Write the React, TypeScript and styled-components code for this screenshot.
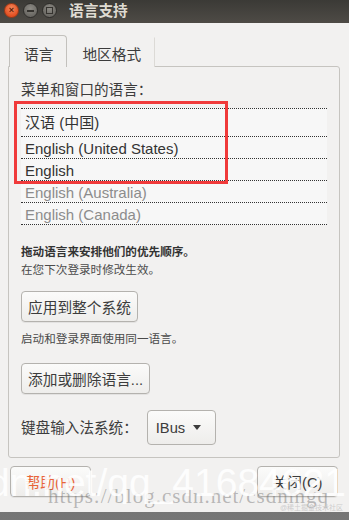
import styled, { createGlobalStyle } from 'styled-components';

const UI = `"Liberation Sans", "Noto Sans CJK SC", sans-serif`;

const GlobalStyle = createGlobalStyle`
  html, body {
    margin: 0;
    padding: 0;
    background: #4a4a4a;
  }
  * {
    box-sizing: border-box;
  }
`;

const Page = styled.div`
  position: relative;
  width: 349px;
  height: 520px;
  overflow: hidden;
  background: linear-gradient(to bottom, #3e3e3e, #767676);
  font-family: ${UI};
`;

const Window = styled.div`
  height: 512px;
  display: flex;
  flex-direction: column;
  background: #f2f1f0;
  color: #3c3c3c;
`;

const TitleBar = styled.div`
  height: 23px;
  flex: none;
  display: flex;
  align-items: center;
  padding: 0 0 2px 4px;
  gap: 4px;
  background: linear-gradient(to bottom, #3b3a36, #4e4b46);
`;

const CircleButton = styled.div<{ $close?: boolean }>`
  width: 15px;
  height: 15px;
  border-radius: 50%;
  display: flex;
  align-items: center;
  justify-content: center;
  border: 1px solid ${(p) => (p.$close ? '#9c3a18' : '#2e2d2a')};
  background: ${(p) =>
    p.$close
      ? 'radial-gradient(circle at 50% 35%, #f5895c, #e24f22 70%)'
      : 'radial-gradient(circle at 50% 35%, #8c8a84, #6a6863 70%)'};
  color: ${(p) => (p.$close ? '#5a1d08' : '#35332f')};
  font-size: 9px;
  line-height: 1;
  font-weight: 700;
`;

const MinBar = styled.span`
  display: block;
  width: 7px;
  height: 2px;
  background: #35332f;
`;

const MaxBox = styled.span`
  display: block;
  width: 7px;
  height: 7px;
  border: 1.5px solid #35332f;
`;

const Title = styled.div`
  margin-left: 8px;
  color: #dfdbd2;
  font-size: 14.7px;
  font-weight: 700;
  line-height: 18px;
`;

const Body = styled.div`
  flex: 1;
  display: flex;
  flex-direction: column;
  padding: 12px 9px 0 8px;
`;

const Tabs = styled.div`
  display: flex;
  height: 32px;
  margin-left: 1px;
  margin-bottom: -1px;
  position: relative;
  z-index: 1;
`;

const Tab = styled.div<{ $active?: boolean }>`
  display: flex;
  align-items: center;
  padding: 3px 13px 0 14px;
  font-size: 14.7px;
  color: #3c3c3c;
  background: #f2f1f0;
  border: 1px solid ${(p) => (p.$active ? '#c3c1bd' : 'transparent')};
  border-bottom: none;
  border-radius: 4px 4px 0 0;
  ${(p) =>
    !p.$active &&
    `
    border-radius: 0;
    border-right: 1px solid #dcdad6;
    margin-top: 2px;
    padding-top: 1px;
  `}
`;

const Panel = styled.div`
  border: 1px solid #c6c4c0;
  border-radius: 0 3px 3px 3px;
  padding: 14px 12px 12px 12px;
  display: flex;
  flex-direction: column;
`;

const Label = styled.div`
  font-size: 14.6px;
  line-height: 18px;
  color: #3c3c3c;
`;

const List = styled.div`
  margin-top: 9px;
  background: #f7f7f7;
  border-bottom: 1px dotted #333;
  display: flex;
  flex-direction: column;
`;

const Row = styled.div<{ $tall?: boolean; $dim?: boolean }>`
  height: ${(p) => (p.$tall ? 28 : 22)}px;
  border-top: 1px dotted #333;
  display: flex;
  align-items: center;
  padding: ${(p) => (p.$tall ? '0 0 2px 4px' : '1px 0 0 4px')};
  font-size: 15px;
  color: ${(p) => (p.$dim ? '#8c8c8c' : '#333333')};
`;

const Hint = styled.div<{ $bold?: boolean; $gap?: number }>`
  margin-top: ${(p) => p.$gap ?? 0}px;
  font-size: 11.6px;
  line-height: 18px;
  font-weight: ${(p) => (p.$bold ? 700 : 400)};
  color: ${(p) => (p.$bold ? '#333' : '#4a4a4a')};
`;

const Button = styled.button<{ $gap?: number; $accent?: boolean }>`
  align-self: flex-start;
  margin-top: ${(p) => p.$gap ?? 0}px;
  height: 31px;
  padding: 0 6px;
  font-family: ${UI};
  font-size: 14.7px;
  color: ${(p) => (p.$accent ? '#e8643a' : '#3c3c3c')};
  background: linear-gradient(to bottom, #fbfbfa, #eeedeb);
  border: 1px solid #b4b2ae;
  border-radius: 4px;
  box-shadow: 0 1px 0 rgba(0, 0, 0, 0.06);
`;

const KeyboardRow = styled.div`
  margin-top: 16px;
  display: flex;
  align-items: center;
  gap: 9px;
`;

const Combo = styled.div`
  width: 69px;
  height: 35px;
  display: flex;
  align-items: center;
  justify-content: space-between;
  padding: 0 14px 0 8px;
  font-size: 14.7px;
  color: #3c3c3c;
  background: linear-gradient(to bottom, #fbfbfa, #eeedeb);
  border: 1px solid #b4b2ae;
  border-radius: 4px;
`;

const Caret = styled.span`
  width: 0;
  height: 0;
  border-left: 4.5px solid transparent;
  border-right: 4.5px solid transparent;
  border-top: 5px solid #3c3c3c;
`;

const Footer = styled.div`
  margin-top: 8px;
  display: flex;
  justify-content: space-between;
  padding: 0 2px;
`;

const FooterButton = styled(Button)`
  width: 81px;
  padding: 0;
`;

const RedBox = styled.div`
  position: absolute;
  left: 14px;
  top: 101px;
  width: 214px;
  height: 83px;
  border: 3px solid #f03a3a;
  pointer-events: none;
`;

const BigMark = styled.div`
  position: absolute;
  left: -12px;
  top: 460px;
  font-family: "Liberation Sans", sans-serif;
  font-size: 39px;
  line-height: 46px;
  color: rgba(255, 255, 255, 0.88);
  white-space: nowrap;
  pointer-events: none;
`;

const UrlMark = styled.div`
  position: absolute;
  left: 48px;
  top: 483px;
  font-family: "Liberation Serif", serif;
  font-size: 21px;
  line-height: 26px;
  letter-spacing: 1px;
  color: rgba(110, 110, 110, 0.45);
  white-space: nowrap;
  pointer-events: none;
`;

const TinyMark = styled.div`
  position: absolute;
  left: 280px;
  top: 503px;
  font-family: ${UI};
  font-size: 7px;
  line-height: 10px;
  color: rgba(200, 200, 200, 0.9);
  white-space: nowrap;
  pointer-events: none;
`;

const languages = [
  { name: '汉语 (中国)', tall: true },
  { name: 'English (United States)' },
  { name: 'English' },
  { name: 'English (Australia)', dim: true },
  { name: 'English (Canada)', dim: true },
];

export default function App() {
  return (
    <Page>
      <GlobalStyle />
      <Window>
        <TitleBar>
          <CircleButton $close>×</CircleButton>
          <CircleButton>
            <MinBar />
          </CircleButton>
          <CircleButton>
            <MaxBox />
          </CircleButton>
          <Title>语言支持</Title>
        </TitleBar>
        <Body>
          <Tabs>
            <Tab $active>语言</Tab>
            <Tab>地区格式</Tab>
          </Tabs>
          <Panel>
            <Label>菜单和窗口的语言：</Label>
            <List>
              {languages.map((l) => (
                <Row key={l.name} $tall={l.tall} $dim={l.dim}>
                  {l.name}
                </Row>
              ))}
            </List>
            <Hint $bold $gap={18}>
              拖动语言来安排他们的优先顺序。
            </Hint>
            <Hint>在您下次登录时修改生效。</Hint>
            <Button $gap={12}>应用到整个系统</Button>
            <Hint $gap={8}>启动和登录界面使用同一语言。</Hint>
            <Button $gap={15}>添加或删除语言...</Button>
            <KeyboardRow>
              <Label>键盘输入法系统：</Label>
              <Combo>
                IBus
                <Caret />
              </Combo>
            </KeyboardRow>
          </Panel>
          <Footer>
            <FooterButton $accent>帮助(H)</FooterButton>
            <FooterButton>关闭(C)</FooterButton>
          </Footer>
        </Body>
      </Window>
      <RedBox />
      <UrlMark>https://blog.csdn.net/csdnmgq</UrlMark>
      <BigMark>dn.net/qq_41684621</BigMark>
      <TinyMark>@稀土掘金技术社区</TinyMark>
    </Page>
  );
}
